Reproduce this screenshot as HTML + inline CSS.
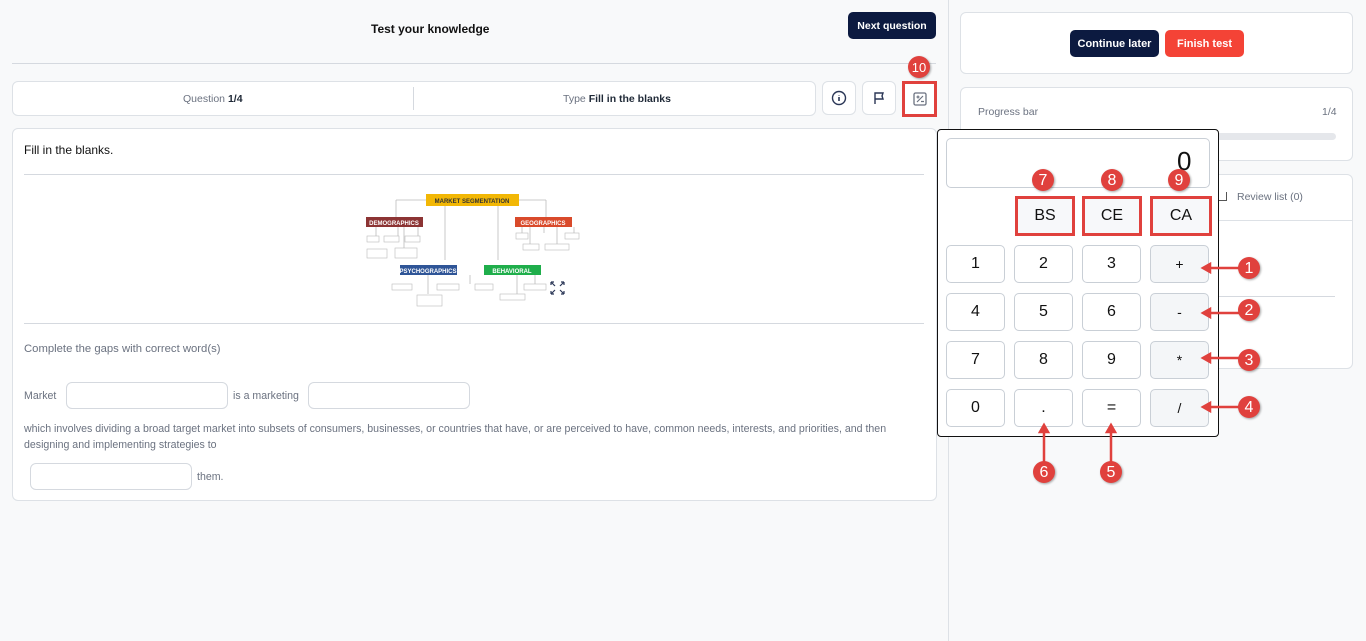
<!DOCTYPE html>
<html><head><meta charset="utf-8"><style>
*{box-sizing:border-box;margin:0;padding:0}
body{width:1366px;height:641px;background:#f8f9fa;font-family:"Liberation Sans",sans-serif;position:relative;overflow:hidden;color:#1f2937}
.a{position:absolute}
.card{position:absolute;background:#fff;border:1px solid #dde1e6;border-radius:6px}
.btn{position:absolute;color:#fff;font-weight:bold;font-size:11px;border-radius:5px;display:flex;align-items:center;justify-content:center;white-space:nowrap}
.ib{position:absolute;top:81px;width:34px;height:34px;background:#fff;border:1px solid #dde1e6;border-radius:6px;display:flex;align-items:center;justify-content:center}
.k{position:absolute;width:59px;height:38px;border:1px solid #c9cfd6;border-radius:5px;background:#fff;font-size:16px;display:flex;align-items:center;justify-content:center;color:#111}
.op{background:#f4f6f8;font-size:14px}
.red{border:3px solid #e0413d;border-radius:0;background:#f7f8fa}
.badge{position:absolute;width:22px;height:22px;border-radius:50%;background:#e0413d;color:#fff;font-size:16px;display:flex;align-items:center;justify-content:center;padding-top:1px;box-shadow:1px 1px 2px rgba(0,0,0,.35)}
.inp{position:absolute;height:27px;border:1px solid #d5d9df;border-radius:6px;background:#fff}
.t{position:absolute;font-size:10.6px;color:#6b7280}
</style></head><body>
<div class="a" style="left:948px;top:0;width:1px;height:641px;background:#dde1e6"></div>
<div class="a" style="left:371px;top:22px;font-size:12px;font-weight:bold;color:#111">Test your knowledge</div>
<div class="btn" style="left:848px;top:12px;width:88px;height:27px;background:#0c1a40;font-size:10.5px">Next question</div>
<div class="a" style="left:12px;top:63px;width:924px;height:1px;background:#d5d9df"></div>
<div class="card" style="left:12px;top:81px;width:804px;height:35px"></div>
<div class="a" style="left:413px;top:87px;width:1px;height:23px;background:#d5d9df"></div>
<div class="a" style="left:183px;top:93px;font-size:10.5px;color:#6b7280">Question <b style="color:#1f2937">1/4</b></div>
<div class="a" style="left:563px;top:93px;font-size:10.5px;color:#6b7280">Type <b style="color:#1f2937">Fill in the blanks</b></div>
<div class="ib" style="left:822px"><svg width="16" height="16" viewBox="0 0 16 16"><circle cx="8" cy="8" r="6.5" fill="none" stroke="#2a3656" stroke-width="1.4"/><path d="M8 7v4M8 5v.5" stroke="#2a3656" stroke-width="1.6"/></svg></div>
<div class="ib" style="left:862px"><svg width="16" height="16" viewBox="0 0 16 16"><path d="M4 14V3h8l-1 3 1 3H4" fill="none" stroke="#2a3656" stroke-width="1.4"/></svg></div>
<div class="ib" style="left:902px;border:3px solid #e0413d;border-radius:0;width:35px;height:36px"><svg width="14" height="14" viewBox="0 0 14 14"><rect x="1" y="1" width="12" height="12" rx="1.5" fill="none" stroke="#6b7280" stroke-width="1.3"/><path d="M4 10l6-6M3.5 5h3M5 3.5v3M8 9.5h3" stroke="#6b7280" stroke-width="1.2"/></svg></div>
<div class="badge" style="left:908px;top:56px;font-size:13px">10</div>

<div class="card" style="left:12px;top:128px;width:925px;height:373px"></div>
<div class="a" style="left:24px;top:143px;font-size:12px;color:#111">Fill in the blanks.</div>
<div class="a" style="left:24px;top:174px;width:900px;height:1px;background:#d5d9df"></div>
<div class="a" style="left:24px;top:323px;width:900px;height:1px;background:#d5d9df"></div>
<svg class="a" style="left:360px;top:190px" width="220" height="120" viewBox="0 0 220 120">
<g stroke="#bbb" fill="none" stroke-width="0.8"><path d="M36 10h150M36 10v18M186 10v18M85 10v60M138 10v60"/><path d="M16 37v9M38 37v9M44 37v21M58 37v9M162 37v6M184 37v6M170 37v17M197 37v17M214 37v6"/><path d="M68 85v19M110 85v9M157 85v19M175 85v9"/></g>
<rect x="66" y="4" width="93" height="12" fill="#f2b705"/><text x="112" y="13" font-size="6" font-weight="bold" text-anchor="middle" fill="#333">MARKET SEGMENTATION</text>
<rect x="6" y="27" width="57" height="10" fill="#8c3434"/><text x="34" y="35" font-size="6" font-weight="bold" text-anchor="middle" fill="#fff">DEMOGRAPHICS</text>
<rect x="155" y="27" width="57" height="10" fill="#d94a2b"/><text x="183" y="35" font-size="6" font-weight="bold" text-anchor="middle" fill="#fff">GEOGRAPHICS</text>
<rect x="40" y="75" width="57" height="10" fill="#2f5597"/><text x="68" y="83" font-size="6" font-weight="bold" text-anchor="middle" fill="#fff">PSYCHOGRAPHICS</text>
<rect x="124" y="75" width="57" height="10" fill="#1fae4b"/><text x="152" y="83" font-size="6" font-weight="bold" text-anchor="middle" fill="#fff">BEHAVIORAL</text>
<g fill="#fff" stroke="#bbb" stroke-width="0.6"><rect x="7" y="46" width="12" height="6"/><rect x="24" y="46" width="15" height="6"/><rect x="45" y="46" width="15" height="6"/><rect x="7" y="59" width="20" height="9"/><rect x="35" y="58" width="22" height="10"/><rect x="156" y="43" width="12" height="6"/><rect x="205" y="43" width="14" height="6"/><rect x="163" y="54" width="16" height="6"/><rect x="185" y="54" width="24" height="6"/><rect x="32" y="94" width="20" height="6"/><rect x="77" y="94" width="22" height="6"/><rect x="57" y="105" width="25" height="11"/><rect x="115" y="94" width="18" height="6"/><rect x="164" y="94" width="22" height="6"/><rect x="140" y="104" width="25" height="6"/></g>
<g stroke="#2a3656" stroke-width="1.2" fill="none"><path d="M191 92l4 4M191 92h3M191 92v3M204 92l-4 4M204 92h-3M204 92v3M191 104l4-4M191 104h3M191 104v-3M204 104l-4-4M204 104h-3M204 104v-3"/></g>
</svg>
<div class="a" style="left:24px;top:343px;font-size:11.3px;color:#6b7280">Complete the gaps with correct word(s)</div>
<div class="t" style="left:24px;top:390px">Market</div>
<div class="inp" style="left:66px;top:382px;width:162px"></div>
<div class="t" style="left:233px;top:390px">is a marketing</div>
<div class="inp" style="left:308px;top:382px;width:162px"></div>
<div class="t" style="left:24px;top:421px;line-height:16px;width:900px">which involves dividing a broad target market into subsets of consumers, businesses, or countries that have, or are perceived to have, common needs, interests, and priorities, and then designing and implementing strategies to</div>
<div class="inp" style="left:30px;top:463px;width:162px"></div>
<div class="t" style="left:197px;top:471px">them.</div>

<div class="card" style="left:960px;top:12px;width:393px;height:62px"></div>
<div class="btn" style="left:1070px;top:30px;width:89px;height:27px;background:#0c1a40">Continue later</div>
<div class="btn" style="left:1165px;top:30px;width:79px;height:27px;background:#f44336">Finish test</div>
<div class="card" style="left:960px;top:87px;width:393px;height:74px"></div>
<div class="a" style="left:978px;top:106px;font-size:10.5px;color:#6b7280">Progress bar</div>
<div class="a" style="left:1322px;top:106px;font-size:10.5px;color:#6b7280">1/4</div>
<div class="a" style="left:1200px;top:133px;width:136px;height:7px;background:#e5e7eb;border-radius:4px"></div>
<div class="card" style="left:960px;top:174px;width:393px;height:195px"></div>
<div class="a" style="left:960px;top:220px;width:393px;height:1px;background:#dde1e6"></div>
<div class="a" style="left:1217px;top:296px;width:118px;height:1px;background:#d5d9df"></div>
<div class="a" style="left:1218px;top:192px;width:9px;height:9px;border:1px solid #555;border-top:none"></div>
<div class="a" style="left:1237px;top:191px;font-size:10.5px;color:#6b7280">Review list (0)</div>

<div class="a" style="left:937px;top:129px;width:282px;height:308px;background:#fff;border:1px solid #111;border-radius:4px"></div>
<div class="a" style="left:946px;top:138px;width:264px;height:50px;border:1px solid #c9cfd6;border-radius:5px"></div>
<div class="a" style="left:1177px;top:146px;font-size:26px;color:#111">0</div>
<div class="k red" style="left:1015px;top:196px;width:60px;height:40px">BS</div>
<div class="k red" style="left:1082px;top:196px;width:60px;height:40px">CE</div>
<div class="k red" style="left:1150px;top:196px;width:62px;height:40px">CA</div>
<div class="k" style="left:946px;top:245px">1</div><div class="k" style="left:1014px;top:245px">2</div><div class="k" style="left:1082px;top:245px">3</div><div class="k op" style="left:1150px;top:245px">+</div>
<div class="k" style="left:946px;top:293px">4</div><div class="k" style="left:1014px;top:293px">5</div><div class="k" style="left:1082px;top:293px">6</div><div class="k op" style="left:1150px;top:293px">-</div>
<div class="k" style="left:946px;top:341px">7</div><div class="k" style="left:1014px;top:341px">8</div><div class="k" style="left:1082px;top:341px">9</div><div class="k op" style="left:1150px;top:341px">*</div>
<div class="k" style="left:946px;top:389px">0</div><div class="k" style="left:1014px;top:389px">.</div><div class="k" style="left:1082px;top:389px">=</div><div class="k op" style="left:1150px;top:389px">/</div>
<svg class="a" style="left:0;top:0" width="1366" height="641"><g stroke="#e0413d" stroke-width="2.5" fill="#e0413d">
<path d="M1207 268h32M1207 313h32M1207 358h32M1207 407h32M1044 428v34M1111 428v34" fill="none"/>
<path d="M1203 268l7-4v8zM1203 313l7-4v8zM1203 358l7-4v8zM1203 407l7-4v8zM1044 425l-4 7h8zM1111 425l-4 7h8z"/></g></svg>
<div class="badge" style="left:1238px;top:257px">1</div>
<div class="badge" style="left:1238px;top:299px">2</div>
<div class="badge" style="left:1238px;top:349px">3</div>
<div class="badge" style="left:1238px;top:396px">4</div>
<div class="badge" style="left:1100px;top:461px">5</div>
<div class="badge" style="left:1033px;top:461px">6</div>
<div class="badge" style="left:1032px;top:169px">7</div>
<div class="badge" style="left:1101px;top:169px">8</div>
<div class="badge" style="left:1168px;top:169px">9</div>
</body></html>
